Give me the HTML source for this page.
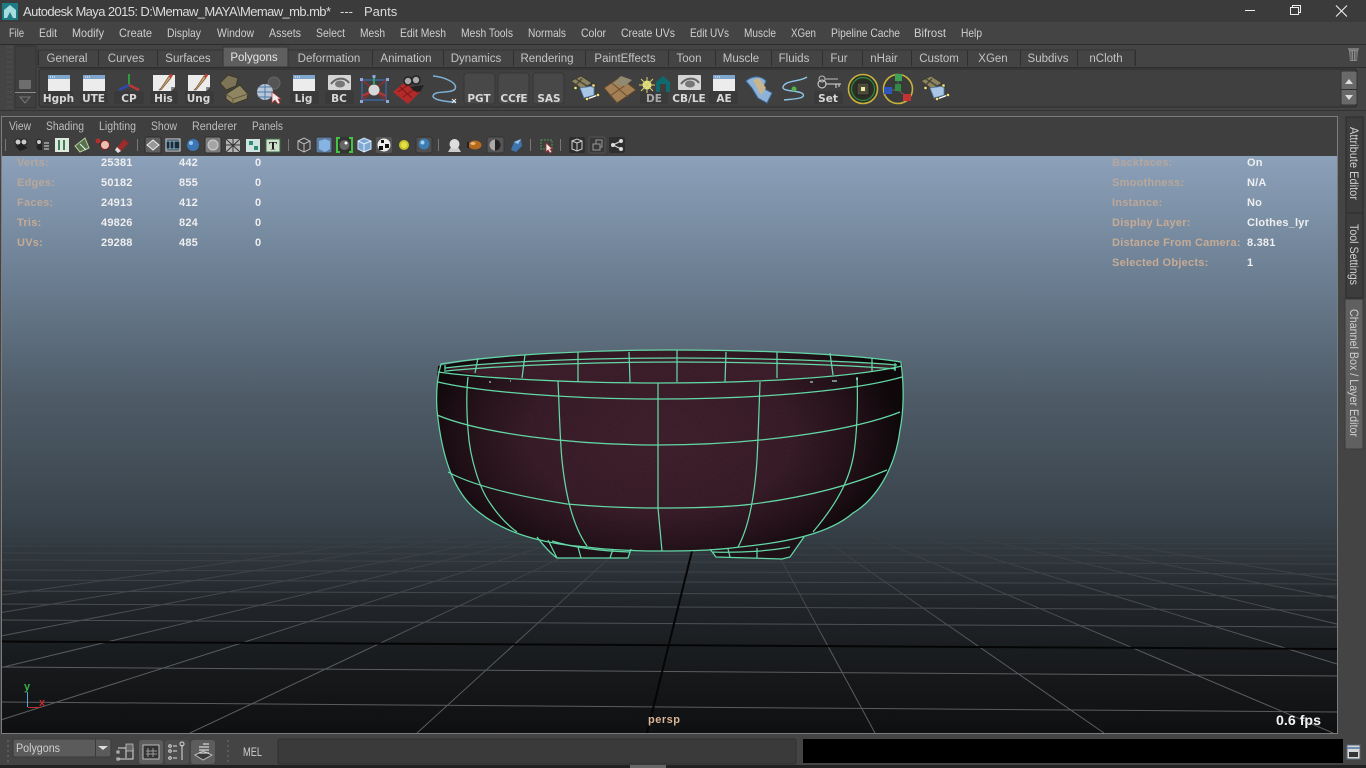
<!DOCTYPE html>
<html><head><meta charset="utf-8"><title>Autodesk Maya 2015</title>
<style>
html,body{margin:0;padding:0;background:#444;overflow:hidden;width:1366px;height:768px}
svg{display:block;position:absolute;left:0;top:0}
text{font-family:"Liberation Sans",sans-serif}
.m{font-size:12px;fill:#cfcfcf}
.v{font-size:11.5px;fill:#bdbdbd}
.t{font-size:11.5px;fill:#c4c4c4;text-anchor:middle}
.tb{font-size:11.5px;fill:#e6e6e6;text-anchor:middle}
.l{font-family:"DejaVu Sans","Liberation Sans",sans-serif;font-size:10.5px;font-weight:bold;fill:#d8d8d8;text-anchor:middle}
.h{font-size:11px;font-weight:bold;fill:#c8ab94;letter-spacing:.25px}
.d{font-size:11px;font-weight:bold;fill:#efefef;letter-spacing:.2px}
.side{font-size:12px;fill:#cfcfcf}
.g line{stroke:#5a5d60;stroke-width:1}
.w path{fill:none;stroke:#63d8a6;stroke-width:1.25}
</style></head><body>
<svg width="1366" height="768" viewBox="0 0 1366 768" xmlns="http://www.w3.org/2000/svg">
<defs>
<linearGradient id="sky" x1="0" y1="156" x2="0" y2="733" gradientUnits="userSpaceOnUse">
<stop offset="0" stop-color="#8ca1ba"/><stop offset=".2" stop-color="#6d8094"/><stop offset=".42" stop-color="#4e5b67"/><stop offset=".63" stop-color="#39434b"/><stop offset=".78" stop-color="#212529"/><stop offset=".9" stop-color="#16181a"/><stop offset="1" stop-color="#0f1011"/>
</linearGradient>
<linearGradient id="fade" x1="0" y1="525" x2="0" y2="650" gradientUnits="userSpaceOnUse">
<stop offset="0" stop-color="#fff" stop-opacity="0"/><stop offset=".5" stop-color="#fff" stop-opacity=".55"/><stop offset="1" stop-color="#fff"/>
</linearGradient>
<mask id="gm" maskUnits="userSpaceOnUse" x="0" y="156" width="1366" height="600"><rect x="0" y="500" width="1366" height="240" fill="url(#fade)"/></mask>
<clipPath id="vp"><rect x="2" y="156" width="1335" height="577"/></clipPath>
<radialGradient id="bowl" gradientUnits="userSpaceOnUse" cx="660" cy="435" r="240" gradientTransform="translate(660 435) scale(1 .6) translate(-660 -435)">
<stop offset="0" stop-color="#43222f"/><stop offset=".55" stop-color="#3c1e2b"/><stop offset=".82" stop-color="#25121a"/><stop offset="1" stop-color="#10090c"/>
</radialGradient>
<filter id="noise" x="0" y="0" width="100%" height="100%"><feTurbulence type="fractalNoise" baseFrequency="1.1" numOctaves="2"/><feColorMatrix values="0 0 0 0 0 0 0 0 0 0 0 0 0 0 0 0 0 0 .9 -.3"/></filter>
<clipPath id="bc"><path d="M438,366C500,354 600,350 670,350C760,350 850,354 902,362C904,385 904,410 900,430C895,470 875,500 853,513C830,533 790,542 740,547C710,551 680,551 660,551C630,551 600,549 587,547C555,545 510,537 480,513C455,495 442,460 437,410C436,395 437,380 438,366Z"/></clipPath>
<g id="win"><rect x="-11" y="0" width="22" height="16" fill="#ececec"/><rect x="-11" y="0" width="22" height="4" fill="#7fa6cc"/><rect x="-9" y="1.5" width="1" height="1" fill="#fff"/><rect x="-7" y="1.5" width="1" height="1" fill="#fff"/><rect x="-5" y="1.5" width="1" height="1" fill="#fff"/></g>
<g id="note"><path d="M-11,0H11V12L7,16H-11Z" fill="#ececec"/><path d="M7,16V12H11Z" fill="#888"/><path d="M-3,13L-5,15L-3,15L7,3L5,1Z" fill="#c9a36b" stroke="#6b4a2c" stroke-width=".6"/><path d="M5,1L7,3L9,0.5L7,-1.5Z" fill="#c23a3a"/></g>
<g id="plate"><path d="M-13,-8L-3,-13L8,-6L-2,0Z" fill="#8d8464" stroke="#3e3a2a" stroke-width=".8"/><path d="M-8,-10L3,-3M-2,-10.5L-8,-4" stroke="#4a4530" stroke-width="1.4" fill="none"/><path d="M-4,-1L10,-3L10,6L0,9Z" fill="#a9c6e4" stroke="#527ea8" stroke-width=".8"/><path d="M3,10L14,6" stroke="#fff" stroke-width="1.4"/><rect x="-10" y="-2.5" width="3" height="3" fill="#f1e27a" stroke="#222" stroke-width=".5"/><rect x="8" y="-5" width="3" height="3" fill="#f1e27a" stroke="#222" stroke-width=".5"/><rect x="1.5" y="8.5" width="3" height="3" fill="#f1e27a" stroke="#222" stroke-width=".5"/><rect x="12.5" y="4.5" width="3" height="3" fill="#f1e27a" stroke="#222" stroke-width=".5"/></g>
</defs>

<!-- chrome backgrounds -->
<rect width="1366" height="768" fill="#444"/>
<rect width="1366" height="22" fill="#3b3b3b"/>
<rect y="44" width="1366" height="1" fill="#2b2b2b"/>
<rect y="67" x="38" width="1328" height="1" fill="#2e2e2e"/>
<rect x="39" y="69" width="1318" height="38" rx="3" fill="#404040" stroke="#2c2c2c"/>
<rect y="110" width="1366" height="1" fill="#333"/>

<!-- title -->
<rect x="2" y="3" width="16" height="17" fill="#1d7b83"/><path d="M4,18V10L10,5L16,10V18H13L10,12L7,18Z" fill="#a7dde0"/>
<text x="23" y="16" font-size="13" fill="#dcdcdc" textLength="308">Autodesk Maya 2015: D:\Memaw_MAYA\Memaw_mb.mb*</text>
<text x="340" y="16" font-size="13" fill="#dcdcdc">---</text>
<text x="364" y="16" font-size="13" fill="#dcdcdc">Pants</text>
<path d="M1245,10.5H1255" stroke="#eee"/>
<path d="M1290.5,7.5H1298.5V14.5H1290.5ZM1292.5,7V5.5H1300.5V12.5H1299" fill="none" stroke="#eee"/>
<path d="M1336,5.5L1347,16.5M1347,5.5L1336,16.5" stroke="#eee" stroke-width="1.1"/>

<!-- menu -->
<text class="m" x="9" y="37" textLength="15" lengthAdjust="spacingAndGlyphs">File</text><text class="m" x="39" y="37" textLength="18" lengthAdjust="spacingAndGlyphs">Edit</text><text class="m" x="72" y="37" textLength="32" lengthAdjust="spacingAndGlyphs">Modify</text><text class="m" x="119" y="37" textLength="33" lengthAdjust="spacingAndGlyphs">Create</text><text class="m" x="167" y="37" textLength="34" lengthAdjust="spacingAndGlyphs">Display</text><text class="m" x="217" y="37" textLength="37" lengthAdjust="spacingAndGlyphs">Window</text><text class="m" x="269" y="37" textLength="32" lengthAdjust="spacingAndGlyphs">Assets</text><text class="m" x="316" y="37" textLength="29" lengthAdjust="spacingAndGlyphs">Select</text><text class="m" x="360" y="37" textLength="25" lengthAdjust="spacingAndGlyphs">Mesh</text><text class="m" x="400" y="37" textLength="46" lengthAdjust="spacingAndGlyphs">Edit Mesh</text><text class="m" x="461" y="37" textLength="52" lengthAdjust="spacingAndGlyphs">Mesh Tools</text><text class="m" x="528" y="37" textLength="38" lengthAdjust="spacingAndGlyphs">Normals</text><text class="m" x="581" y="37" textLength="25" lengthAdjust="spacingAndGlyphs">Color</text><text class="m" x="621" y="37" textLength="54" lengthAdjust="spacingAndGlyphs">Create UVs</text><text class="m" x="690" y="37" textLength="39" lengthAdjust="spacingAndGlyphs">Edit UVs</text><text class="m" x="744" y="37" textLength="32" lengthAdjust="spacingAndGlyphs">Muscle</text><text class="m" x="791" y="37" textLength="25" lengthAdjust="spacingAndGlyphs">XGen</text><text class="m" x="831" y="37" textLength="69" lengthAdjust="spacingAndGlyphs">Pipeline Cache</text><text class="m" x="914" y="37" textLength="32" lengthAdjust="spacingAndGlyphs">Bifrost</text><text class="m" x="961" y="37" textLength="21" lengthAdjust="spacingAndGlyphs">Help</text>

<!-- shelf handle -->
<rect x="15" y="46" width="21" height="62" fill="#3f3f3f" stroke="#333"/>
<path d="M8,46V108M11,46V108" stroke="#555" stroke-dasharray="2 3"/>
<rect x="19" y="80" width="12" height="9" rx="1" fill="#6e6e6e"/>
<path d="M15,92.5H36" stroke="#8a8a8a"/>
<path d="M20,97H30L25,103Z" fill="none" stroke="#777"/>

<!-- tabs -->
<path d="M38,66V50H1135V66" fill="#444" stroke="#333"/>
<path d="M38.5,50V66M98.5,50V66M157.5,50V66M372.5,50V66M443.5,50V66M513.5,50V66M585.5,50V66M668.5,50V66M715.5,50V66M771.5,50V66M822.5,50V66M862.5,50V66M911.5,50V66M967.5,50V66M1020.5,50V66M1077.5,50V66M1135.5,50V66" stroke="#2f2f2f"/>
<path d="M223,67V47H288V67Z" fill="#5f5f5f" stroke="#333"/>
<text class="t" x="67" y="62">General</text><text class="t" x="126" y="62">Curves</text><text class="t" x="188" y="62">Surfaces</text><text class="tb" x="254" y="61">Polygons</text><text class="t" x="329" y="62">Deformation</text><text class="t" x="406" y="62">Animation</text><text class="t" x="476" y="62">Dynamics</text><text class="t" x="547" y="62">Rendering</text><text class="t" x="625" y="62">PaintEffects</text><text class="t" x="689" y="62">Toon</text><text class="t" x="741" y="62">Muscle</text><text class="t" x="794" y="62">Fluids</text><text class="t" x="839" y="62">Fur</text><text class="t" x="884" y="62">nHair</text><text class="t" x="939" y="62">Custom</text><text class="t" x="993" y="62">XGen</text><text class="t" x="1048" y="62">Subdivs</text><text class="t" x="1106" y="62">nCloth</text>

<!-- trash -->
<path d="M1349,50H1358L1357,61H1350Z" fill="#8a8a8a"/><path d="M1348,49.5H1359M1351,51V60M1353.5,51V60M1356,51V60" stroke="#4b4b4b"/><path d="M1348,49H1359" stroke="#aaa"/>

<!-- shelf scroll -->
<rect x="1341" y="71" width="16" height="34" rx="2" fill="#696969" stroke="#333"/>
<path d="M1341,89.5H1357" stroke="#2e2e2e"/><path d="M1345,84H1353L1349,79Z" fill="#ddd"/><path d="M1345,95H1353L1349,100Z" fill="#ddd"/>

<!-- shelf icons -->
<g fill="#3a3a3a">
<rect x="44" y="91" width="29" height="13" rx="2"/><rect x="80" y="91" width="28" height="13" rx="2"/><rect x="114" y="91" width="30" height="13" rx="2"/><rect x="150" y="91" width="28" height="13" rx="2"/><rect x="185" y="91" width="29" height="13" rx="2"/><rect x="290" y="91" width="29" height="13" rx="2"/><rect x="325" y="91" width="29" height="13" rx="2"/>
<rect x="464" y="73" width="31" height="31" rx="3" fill="#484848" stroke="#363636"/><rect x="498" y="73" width="31" height="31" rx="3" fill="#484848" stroke="#363636"/><rect x="533" y="73" width="31" height="31" rx="3" fill="#484848" stroke="#363636"/>
<rect x="640" y="91" width="28" height="13" rx="2"/><rect x="709" y="91" width="29" height="13" rx="2"/><rect x="814" y="91" width="29" height="13" rx="2"/>
</g>
<use href="#win" x="59" y="75"/><use href="#win" x="94" y="75"/>
<path d="M129,85V74" stroke="#2f9a3a" stroke-width="2"/><path d="M129,85L119,90" stroke="#2d49b5" stroke-width="2.5"/><path d="M129,85L139,90" stroke="#b93636" stroke-width="2.5"/>
<use href="#note" x="164" y="75"/><use href="#note" x="199" y="75"/><use href="#win" x="304" y="75"/>
<!-- boxes -->
<path d="M220,83L228,75L238,78L236,86L226,90Z" fill="#7d7458" stroke="#3e3a2a"/><path d="M226,94L240,85L248,94L247,99L233,104L226,99Z" fill="#8f8661" stroke="#3b3726"/><path d="M226,94L233,99L248,94M233,99V104" stroke="#5d573f" fill="none"/>
<!-- sphere + cursor -->
<circle cx="274" cy="83" r="6" fill="#555" stroke="#666"/><circle cx="265" cy="92" r="8" fill="#b8c6d8"/><path d="M257,92H273M265,84V100M259,87H271M259,97H271" stroke="#4c78a8" fill="none"/><path d="M272,92L272,103L275,100L278,104L280,103L278,99L281,99Z" fill="#eee" stroke="#b33" stroke-width=".7"/>
<!-- BC eye -->
<rect x="328" y="75" width="23" height="15" rx="1" fill="#d5d5d5"/><path d="M331,84C336,77 345,77 349,83" fill="none" stroke="#666" stroke-width="2"/><ellipse cx="340" cy="84" rx="5" ry="3.5" fill="#777"/>
<!-- manip -->
<path d="M362,80H386V100H362Z" fill="none" stroke="#3a6cb0" stroke-width="1.2"/><path d="M362,80L386,100M386,80L362,100" stroke="#8a3030" stroke-width="1.6"/><path d="M374,90L362,96M374,90L386,96" stroke="#b43838" stroke-width="2"/><circle cx="374" cy="90" r="5.5" fill="#d8d8d8"/><path d="M374,85V77" stroke="#35a05f" stroke-width="2"/><rect x="372.5" y="75" width="3" height="3" fill="#8ad"/><rect x="360" y="78" width="3" height="3" fill="#8ad"/><rect x="386" y="78" width="3" height="3" fill="#8ad"/><rect x="360" y="100" width="3" height="3" fill="#8ad"/><rect x="386" y="100" width="3" height="3" fill="#8ad"/>
<!-- camera -->
<path d="M393,92L405,82L420,92L408,104Z" fill="#b22a2a"/><path d="M398,92L408,85M403,97L413,90M400,87L412,98M406,83L418,93" stroke="#7a1818"/><circle cx="408" cy="81" r="4" fill="#aaa" stroke="#222" stroke-width="1.5"/><circle cx="416" cy="80" r="4" fill="#aaa" stroke="#222" stroke-width="1.5"/><path d="M410,87L424,85L420,92L414,91" fill="#222"/>
<!-- curve -->
<path d="M433,76C445,77 458,83 455,89C451,94 434,90 433,96C433,100 447,102 456,102" fill="none" stroke="#7fb1d6" stroke-width="1.5"/><path d="M452,99L456,103M456,99L452,103" stroke="#eee"/>
<use href="#plate" x="584" y="89"/>
<path d="M604,88L620,77L636,90L617,103Z" fill="#a27f55" stroke="#5e4529"/><path d="M612,83L628,97M627,84L610,96" stroke="#6b4d2d"/><path d="M613,84L621,76L632,80L625,86Z" fill="#8f8a70"/>
<circle cx="647" cy="85" r="4.5" fill="#e6e48a"/><path d="M639,85H655M647,77V93M641,79L653,91M653,79L641,91" stroke="#d6d36d"/><path d="M656,92V82L663,76L670,82V92Z" fill="#0f6a70"/><path d="M660,92V84H666V92Z" fill="#3d3d3d"/>
<rect x="678" y="75" width="23" height="15" rx="1" fill="#d5d5d5"/><path d="M681,84C686,77 695,77 699,83" fill="none" stroke="#666" stroke-width="2"/><ellipse cx="690" cy="84" rx="5" ry="3.5" fill="#777"/>
<use href="#win" x="724" y="75"/>
<path d="M746,81C752,76 760,75 766,81L763,88L772,93L767,103L758,98L752,88Z" fill="#8fb3d8" stroke="#3e6c9c"/><path d="M753,80L761,95L766,88L759,78Z" fill="#c9b58c"/>
<path d="M807,77C800,82 785,80 783,87C782,92 800,90 803,94C806,99 792,99 784,100" fill="none" stroke="#8cc4e6" stroke-width="1.4"/><circle cx="794" cy="89" r="2.5" fill="#53b34d"/>
<circle cx="822" cy="84" r="4" fill="none" stroke="#ddd"/><path d="M826,84H841M836,84V88M839,84V87" stroke="#ddd" fill="none"/><circle cx="822" cy="79" r="3" fill="none" stroke="#bbb"/><path d="M825,79H838" stroke="#bbb"/>
<circle cx="863" cy="89" r="14.5" fill="#2b2f25" stroke="#c8b23e" stroke-width="1.6"/><circle cx="863" cy="89" r="11.5" fill="none" stroke="#2f8a45" stroke-width="1.2"/><rect x="857" y="83" width="12" height="12" fill="#4b4b3a" stroke="#222"/><rect x="861" y="87" width="4" height="4" fill="#efe9b0"/>
<circle cx="898" cy="89" r="14.5" fill="#3a3a38" stroke="#c8b23e" stroke-width="1.6"/><path d="M898,78V90L888,90M898,90L907,97" stroke="#555" stroke-width="1.5" fill="none"/><rect x="895" y="74" width="7" height="7" fill="#3aa356"/><rect x="884" y="87" width="8" height="7" fill="#2e56bb"/><rect x="903" y="94" width="8" height="7" fill="#c23434"/><rect x="895" y="84" width="6" height="7" fill="#2e8a45"/>
<use href="#plate" x="934" y="89"/>
<text class="l" x="58.5" y="102">Hgph</text><text class="l" x="93.5" y="102">UTE</text><text class="l" x="129" y="102">CP</text><text class="l" x="163.5" y="102">His</text><text class="l" x="198.5" y="102">Ung</text><text class="l" x="303.5" y="102">Lig</text><text class="l" x="339" y="102">BC</text><text class="l" x="479" y="102">PGT</text><text class="l" x="514" y="102">CCfE</text><text class="l" x="549" y="102">SAS</text><text class="l" x="654" y="102" style="fill:#aaa">DE</text><text class="l" x="689" y="102">CB/LE</text><text class="l" x="724" y="102">AE</text><text class="l" x="828" y="102">Set</text>

<!-- viewport panel -->
<rect x="1" y="116" width="1337" height="40" fill="#3f3f3f"/>
<path d="M1.5,156V116.5H1337.5V734" fill="none" stroke="#7c7c7c"/>
<text class="v" x="9" y="130" textLength="22" lengthAdjust="spacingAndGlyphs">View</text><text class="v" x="46" y="130" textLength="38" lengthAdjust="spacingAndGlyphs">Shading</text><text class="v" x="99" y="130" textLength="37" lengthAdjust="spacingAndGlyphs">Lighting</text><text class="v" x="151" y="130" textLength="26" lengthAdjust="spacingAndGlyphs">Show</text><text class="v" x="192" y="130" textLength="45" lengthAdjust="spacingAndGlyphs">Renderer</text><text class="v" x="252" y="130" textLength="31" lengthAdjust="spacingAndGlyphs">Panels</text>

<!-- toolbar -->
<path d="M5.5,139V151M137.5,139V151M288.5,139V151M438.5,139V151M530.5,139V151M560.5,139V151" stroke="#777"/>
<g>
<circle cx="18" cy="142" r="3" fill="#ccc" stroke="#222"/><circle cx="24" cy="142" r="3" fill="#ccc" stroke="#222"/><path d="M15,146L22,144L28,148L20,151Z" fill="#222"/>
<circle cx="39" cy="142" r="2.5" fill="#ccc" stroke="#222"/><path d="M36,146L42,144V150H38Z" fill="#222"/><path d="M44,143H49M44,146H49M44,149H49" stroke="#ddd"/>
<rect x="55" y="138" width="14" height="14" fill="#dfe8dc"/><path d="M59,140V150M64,140V150" stroke="#3a7f55" stroke-width="2"/>
<path d="M75,146L85,138L89,148L80,152Z" fill="#5a6f4c" stroke="#b6d09c"/><path d="M80,144L86,150" stroke="#dfe"/>
<path d="M96,141L108,150" stroke="#333" stroke-width="2"/><circle cx="105" cy="145" r="4.5" fill="#e8c0b0" stroke="#8c1f1f"/><circle cx="98" cy="141" r="2.5" fill="#b32f2f"/>
<path d="M115,150L124,139L129,143L120,152Z" fill="#9c2b2b"/><path d="M115,150L118,153L121,151L117,147Z" fill="#ddd"/>
<rect x="145" y="137" width="16" height="16" rx="2" fill="#606060" stroke="#2e2e2e"/><path d="M147,145L153,140L159,145L153,150Z" fill="#999" stroke="#eee"/>
<rect x="166" y="139" width="14" height="12" fill="#172b3b" stroke="#ddd"/><path d="M166,141H180M166,149H180M170,141V149M174,141V149" stroke="#9bc"/>
<circle cx="193" cy="145" r="6" fill="#3b76b6"/><circle cx="191" cy="143" r="2" fill="#9cc7ec"/>
<rect x="205" y="137" width="16" height="16" rx="2" fill="#7c7c7c" stroke="#2e2e2e"/><circle cx="213" cy="145" r="5" fill="#a5a5a5" stroke="#d0d0d0"/>
<rect x="226" y="139" width="14" height="13" fill="#b5b5b5"/><path d="M226,139L240,152M240,139L226,152M233,139V152M226,145H240" stroke="#333"/>
<rect x="246" y="139" width="14" height="13" fill="#cfe3df"/><rect x="249" y="141" width="4" height="4" fill="#2b8b7d"/><rect x="254" y="146" width="4" height="4" fill="#2b8b7d"/>
<rect x="266" y="139" width="14" height="13" fill="#cfe0cd" stroke="#3a6e48"/><text x="273" y="149.5" font-family="Liberation Serif" font-size="12" font-weight="bold" fill="#111" text-anchor="middle" style="font-family:'Liberation Serif',serif">T</text>
<path d="M298,141L304,138L310,141V149L304,152L298,149ZM298,141L304,144L310,141M304,144V152" fill="none" stroke="#bdbdbd"/>
<rect x="316" y="137" width="16" height="16" rx="2" fill="#5e7c9f" stroke="#333"/><path d="M319,141L325,139L330,141V149L325,152L319,149Z" fill="#86b4e2"/>
<rect x="336" y="137" width="17" height="16" fill="#333"/><path d="M340,138H337V152H340M349,138H352V152H349" fill="none" stroke="#43c443" stroke-width="2"/><circle cx="344.5" cy="145" r="5" fill="#666"/><circle cx="346" cy="143" r="1.5" fill="#fff"/>
<path d="M358,141L364,138L371,141V149L364,152L358,149Z" fill="#7ea8d4" stroke="#d3e6f8"/><path d="M358,141L364,144L371,141M364,144V152" fill="none" stroke="#e6f2fb"/>
<rect x="376" y="137" width="16" height="16" rx="2" fill="#555"/><circle cx="384" cy="145" r="6.5" fill="#eee"/><path d="M381,140H384V143H381ZM385,144H389V148H385ZM379,146H383V150H379Z" fill="#111"/>
<circle cx="404" cy="145" r="5" fill="#c9c428"/><circle cx="404" cy="145" r="3" fill="#e5e144"/>
<rect x="416" y="137" width="16" height="16" rx="2" fill="#505050" stroke="#333"/><circle cx="424" cy="144" r="5.5" fill="#3c7db4"/><circle cx="422.5" cy="142.5" r="2" fill="#a9d0ec"/>
<path d="M448,152L451,147H458L461,152Z" fill="#ccc"/><circle cx="454.5" cy="144" r="5" fill="#ddd"/>
<ellipse cx="475" cy="145" rx="6.5" ry="4.5" fill="#b36a1e"/><ellipse cx="473" cy="143.5" rx="2.5" ry="1.5" fill="#e8b878"/><path d="M468,142V148" stroke="#222" stroke-width="2"/>
<rect x="487" y="137" width="17" height="16" rx="2" fill="#555" stroke="#333"/><circle cx="495" cy="145" r="5.5" fill="#222"/><path d="M495,139.5A5.5,5.5 0 0,0 495,150.5Z" fill="#aaa"/>
<path d="M511,150L514,142L521,139L522,146L516,152Z" fill="#3f74ad"/><path d="M514,142L521,139L518,144Z" fill="#9ec3e8"/>
<rect x="541" y="140" width="11" height="9" fill="none" stroke="#4c9a52" stroke-dasharray="2 1"/><path d="M546,143V152L548,150L550,153L552,152L550,149L552.5,149Z" fill="#eee" stroke="#a33" stroke-width=".8"/>
<rect x="569" y="137" width="16" height="16" rx="2" fill="#2e2e2e"/><path d="M572,141L577,139L582,141V149L577,151L572,149ZM572,141L577,143L582,141M577,143V151" fill="none" stroke="#d0d0d0"/>
<rect x="589" y="137" width="16" height="16" rx="2" fill="#383838" stroke="#555"/><path d="M593,144H600V150H593ZM596,144V140H602V147H600" fill="none" stroke="#999"/>
<rect x="609" y="137" width="16" height="16" rx="2" fill="#2e2e2e"/><path d="M613,145L621,141M613,145L621,149" stroke="#ddd" stroke-width="1.2"/><circle cx="613" cy="145" r="2" fill="#ddd"/><circle cx="621" cy="141" r="2" fill="#ddd"/><circle cx="621" cy="149" r="2" fill="#ddd"/>
</g>

<!-- viewport -->
<rect x="2" y="156" width="1335" height="577" fill="url(#sky)"/>
<g clip-path="url(#vp)">
<g mask="url(#gm)">
<g class="g">
<line x1="2" y1="536" x2="1337" y2="538"/><line x1="2" y1="541" x2="1337" y2="544"/><line x1="2" y1="546" x2="1337" y2="549"/><line x1="2" y1="553" x2="1337" y2="556"/><line x1="2" y1="560" x2="1337" y2="564"/><line x1="2" y1="570" x2="1337" y2="574"/><line x1="2" y1="580" x2="1337" y2="584"/><line x1="2" y1="591" x2="1337" y2="596"/><line x1="2" y1="604" x2="1337" y2="610"/><line x1="2" y1="620" x2="1337" y2="627"/><line x1="2" y1="667" x2="1337" y2="676"/><line x1="2" y1="702" x2="1337" y2="712"/>
<line x1="547" y1="530" x2="-499" y2="733"/><line x1="571" y1="530" x2="-270" y2="733"/><line x1="595" y1="530" x2="-40" y2="733"/><line x1="620" y1="530" x2="190" y2="733"/><line x1="640" y1="530" x2="417" y2="733"/>
<line x1="765" y1="530" x2="875" y2="733"/><line x1="810" y1="530" x2="1104" y2="733"/><line x1="855" y1="530" x2="1333" y2="733"/><line x1="900" y1="530" x2="1562" y2="733"/><line x1="945" y1="530" x2="1791" y2="733"/><line x1="990" y1="530" x2="2020" y2="733"/><line x1="1035" y1="530" x2="2249" y2="733"/>
<line x1="500" y1="530" x2="-728" y2="733"/><line x1="455" y1="530" x2="-957" y2="733"/>
</g>
</g>
<path d="M2,641.5L1337,649" stroke="#050505" stroke-width="2" fill="none"/>
<path d="M692,551L647,733" stroke="#050505" stroke-width="2" fill="none"/>
</g>

<!-- bowl -->
<path d="M438,366C500,354 600,350 670,350C760,350 850,354 902,362C904,385 904,410 900,430C895,470 875,500 853,513C830,533 790,542 740,547C710,551 680,551 660,551C630,551 600,549 587,547C555,545 510,537 480,513C455,495 442,460 437,410C436,395 437,380 438,366Z" fill="url(#bowl)"/>
<path d="M537,537L557,558H628L631,549Q580,547 537,537ZM710,549L716,557L782,559L790,557L804,537Q760,546 710,549Z" fill="#1f1118"/>
<path d="M445,368C500,361 600,358 677,358C760,358 850,361 897,365C880,375 760,382 658,382C560,382 470,378 445,368Z" fill="#40202d"/>
<rect x="436" y="350" width="468" height="202" filter="url(#noise)" clip-path="url(#bc)" opacity=".5"/>
<g class="w">
<path d="M441,364C500,354 600,350 670,350C760,350 850,354 901,362C904,385 904,410 900,430C895,470 875,500 853,513C830,533 790,542 740,547C710,551 680,551 660,551C630,551 600,549 587,547C555,545 510,537 480,513C455,495 442,460 437,410C436,395 437,378 441,364Z"/>
<path d="M445,368C500,361 600,358 677,358C760,358 850,361 897,365" stroke-width="2"/>
<path d="M446,371C510,365 600,362 677,362C760,362 850,365 896,369"/>
<path d="M438,372C480,378 570,383 658,383C750,383 850,378 902,366" stroke-width="1.8"/>
<path d="M438,382C480,392 570,399 658,399C750,399 850,392 902,377"/>
<path d="M437,415C480,433 570,445 658,445C750,445 850,432 900,412"/>
<path d="M448,472C470,484 510,495 567,504C600,507 630,508 659,508C700,508 730,507 753,504C800,498 847,487 887,470"/>
<path d="M468,377C466,395 467,417 468,430C470,460 480,489 490,503C500,518 510,527 517,532"/>
<path d="M558,381C559,400 560,442 562,460C565,490 572,525 587,546"/>
<path d="M658,383V508L662,551"/>
<path d="M760,382C759,410 758,442 757,460C755,490 750,525 738,547"/>
<path d="M857,377C858,400 857,428 855,445C852,475 840,500 813,532"/>
<path d="M578,352V382M629,352L630,382M677,350V382M726,352L725,382M777,352V378M830,353L833,375M525,355L522,378M478,358L475,373M872,358V372M445,365V372M895,363V371"/>
<path d="M537,537C543,545 550,553 557,558H628L631,549M557,558L548,540M578,547L581,558M613,549L610,558M552,541C575,548 600,551 630,552"/>
<path d="M710,549L716,557L782,559L790,557L804,537M713,552C740,553 770,551 790,547M728,549L730,557M757,548V558"/>
</g>
<path d="M489,382h2M510,381h1M810,382h3M832,381h5M856,379h2" stroke="#cfe" fill="none"/>

<!-- HUD -->
<text class="h" x="17" y="166" opacity=".7">Verts:</text><text class="d" x="101" y="166">25381</text><text class="d" x="179" y="166">442</text><text class="d" x="255" y="166">0</text>
<text class="h" x="17" y="186" opacity=".8">Edges:</text><text class="d" x="101" y="186">50182</text><text class="d" x="179" y="186">855</text><text class="d" x="255" y="186">0</text>
<text class="h" x="17" y="206" opacity=".85">Faces:</text><text class="d" x="101" y="206">24913</text><text class="d" x="179" y="206">412</text><text class="d" x="255" y="206">0</text>
<text class="h" x="17" y="226">Tris:</text><text class="d" x="101" y="226">49826</text><text class="d" x="179" y="226">824</text><text class="d" x="255" y="226">0</text>
<text class="h" x="17" y="246">UVs:</text><text class="d" x="101" y="246">29288</text><text class="d" x="179" y="246">485</text><text class="d" x="255" y="246">0</text>
<text class="h" x="1112" y="166" opacity=".7">Backfaces:</text><text class="d" x="1247" y="166">On</text>
<text class="h" x="1112" y="186" opacity=".8">Smoothness:</text><text class="d" x="1247" y="186">N/A</text>
<text class="h" x="1112" y="206" opacity=".85">Instance:</text><text class="d" x="1247" y="206">No</text>
<text class="h" x="1112" y="226">Display Layer:</text><text class="d" x="1247" y="226">Clothes_lyr</text>
<text class="h" x="1112" y="246">Distance From Camera:</text><text class="d" x="1247" y="246">8.381</text>
<text class="h" x="1112" y="266">Selected Objects:</text><text class="d" x="1247" y="266">1</text>
<text x="648" y="723" font-size="11" font-weight="bold" fill="#dcb696" letter-spacing=".5">persp</text>
<text x="1276" y="725" font-size="14" font-weight="bold" fill="#f2f2f2" textLength="45" lengthAdjust="spacingAndGlyphs">0.6 fps</text>

<!-- axis -->
<path d="M27.5,692V707" stroke="#5aa7d6"/><path d="M28,707.5H41" stroke="#c22c2c"/>
<text x="24" y="690" font-size="11" font-weight="bold" fill="#35b04b">y</text>
<text x="39" y="706" font-size="11" font-weight="bold" fill="#c22c2c">x</text>

<!-- viewport bottom edge -->
<path d="M1,733.5H1338" stroke="#7c7c7c"/>
<path d="M1.5,156V734" stroke="#7c7c7c"/>

<!-- side tabs -->
<rect x="1346" y="117" width="17" height="96" fill="#3d3d3d" stroke="#2c2c2c"/>
<rect x="1346" y="213" width="17" height="85" fill="#3d3d3d" stroke="#2c2c2c"/>
<rect x="1345" y="299" width="18" height="150" fill="#606060" stroke="#3a3a3a"/>
<text class="side" transform="translate(1350,127) rotate(90)" textLength="73" lengthAdjust="spacingAndGlyphs">Attribute Editor</text>
<text class="side" transform="translate(1350,224) rotate(90)" textLength="61" lengthAdjust="spacingAndGlyphs">Tool Settings</text>
<text class="side" transform="translate(1350,309) rotate(90)" textLength="128" lengthAdjust="spacingAndGlyphs">Channel Box / Layer Editor</text>

<!-- bottom bar -->
<path d="M8,740V762" stroke="#5a5a5a" stroke-dasharray="2 3" stroke-width="2"/>
<rect x="13" y="739" width="98" height="18" rx="2" fill="#5b5b5b" stroke="#3a3a3a"/>
<path d="M95.5,739V757" stroke="#3a3a3a"/>
<path d="M98,746H108L103,750Z" fill="#ddd"/>
<text x="16" y="752" font-size="11.5" fill="#d0d0d0" textLength="44" lengthAdjust="spacingAndGlyphs">Polygons</text>
<rect x="117" y="751" width="2" height="2" fill="none" stroke="#ccc"/><rect x="117" y="758" width="2" height="2" fill="none" stroke="#ccc"/>
<path d="M118,748H126V758M119,759H133V748" fill="none" stroke="#ddd"/><rect x="126" y="744" width="7" height="7" fill="#666" stroke="#ddd" stroke-width=".6"/>
<rect x="139" y="740" width="24" height="24" rx="3" fill="#5d5d5d"/><rect x="143" y="745" width="16" height="14" fill="#333" stroke="#bbb"/><path d="M148,748V757M153,748V757M146,751H157M146,754H157" stroke="#999"/>
<rect x="165" y="740" width="24" height="24" rx="3" fill="#4e4e4e"/><circle cx="170" cy="746" r="1.3" fill="none" stroke="#ddd"/><circle cx="170" cy="751" r="1.3" fill="none" stroke="#ddd"/><circle cx="170" cy="758" r="1.3" fill="none" stroke="#ddd"/><path d="M173,746H177M173,751H177M173,758H177M182,745V760" stroke="#ddd"/><circle cx="182" cy="744" r="2" fill="none" stroke="#ddd"/>
<rect x="191" y="740" width="24" height="24" rx="3" fill="#5d5d5d"/><path d="M195,755L203,751L212,755L203,760Z" fill="#3a3a3a" stroke="#bbb"/><path d="M199,747H209M199,750H209M203,744H209M199,753H209" stroke="#eee"/>
<path d="M228,740V762" stroke="#5a5a5a" stroke-dasharray="2 3" stroke-width="2"/>
<text x="243" y="756" font-size="12" fill="#cfcfcf" textLength="19" lengthAdjust="spacingAndGlyphs">MEL</text>
<rect x="278" y="739" width="518" height="25" rx="2" fill="#3a3a3a" stroke="#303030"/>
<rect x="803" y="739" width="540" height="24" fill="#000"/>
<rect x="1347" y="745" width="13" height="14" fill="#d7d7d7" stroke="#567"/><path d="M1347,748H1360" stroke="#6f8db0" stroke-width="2"/><path d="M1349,752H1358V757H1349Z" fill="#333"/>
<rect y="765" width="1366" height="3" fill="#222"/>
<rect x="630" y="765" width="36" height="3" fill="#666"/>
</svg>
</body></html>
